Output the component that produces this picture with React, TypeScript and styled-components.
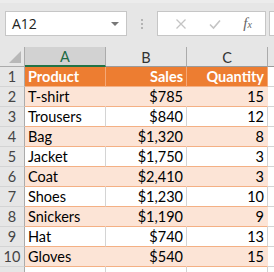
import { createGlobalStyle, styled } from 'styled-components';

const rows: [string, string, string][] = [
  ['T-shirt', '$785', '15'],
  ['Trousers', '$840', '12'],
  ['Bag', '$1,320', '8'],
  ['Jacket', '$1,750', '3'],
  ['Coat', '$2,410', '3'],
  ['Shoes', '$1,230', '10'],
  ['Snickers', '$1,190', '9'],
  ['Hat', '$740', '13'],
  ['Gloves', '$540', '15'],
];

export default function App() {
  return (
    <>
      <GlobalStyle />
      <Page>
        <TopStrip />
        <Toolbar>
          <NameBox>
            <span>A12</span>
            <Caret />
          </NameBox>
          <Grip>
            <i />
            <i />
            <i />
          </Grip>
          <FormulaBox>
            <ToolIcon viewBox="0 0 12 12">
              <path d="M1.5 1.5 L10.5 10.5 M10.5 1.5 L1.5 10.5" stroke="#c4c4c4" strokeWidth="1.3" fill="none" />
            </ToolIcon>
            <ToolIcon viewBox="0 0 12 12">
              <path d="M1 6.5 L4.5 10 L11 2.5" stroke="#c4c4c4" strokeWidth="1.6" fill="none" />
            </ToolIcon>
            <Fx>
              f<sub>x</sub>
            </Fx>
          </FormulaBox>
          <FormulaEdge />
        </Toolbar>

        <Sheet>
          <Corner>
            <CornerMark />
          </Corner>
          <ColHead $selected>A</ColHead>
          <ColHead>B</ColHead>
          <ColHead>C</ColHead>
          <ColHead $last />

          <RowHead>1</RowHead>
          <Cell $band="head">Product</Cell>
          <Cell $band="head" $right>Sales</Cell>
          <Cell $band="head" $right>Quantity</Cell>
          <Cell $band="plain" $edge />

          {rows.map((r, i) => {
            const band = i % 2 === 0 ? 'shade' : 'plain';
            return [
              <RowHead key={`h${i}`}>{i + 2}</RowHead>,
              <Cell key={`a${i}`} $band={band}>{r[0]}</Cell>,
              <Cell key={`b${i}`} $band={band} $right>{r[1]}</Cell>,
              <Cell key={`c${i}`} $band={band} $right>{r[2]}</Cell>,
              <Cell key={`d${i}`} $band="plain" $edge />,
            ];
          })}

          {/* row 11 is only a few pixels tall in the shot, its label is off screen */}
          <RowHead />
          <Cell $band="plain" />
          <Cell $band="plain" />
          <Cell $band="plain" />
          <Cell $band="plain" $edge />
        </Sheet>
      </Page>
    </>
  );
}

const GlobalStyle = createGlobalStyle`
  html, body {
    margin: 0;
    background: #e6e6e6;
    overflow: hidden;
  }
  body {
    font-family: Lato, "Open Sans", sans-serif;
  }
`;

const Page = styled.div`
  width: 274px;
  height: 272px;
  overflow: hidden;
  background: #e6e6e6;
`;

const TopStrip = styled.div`
  height: 3px;
  background: #ececec;
`;

const Toolbar = styled.div`
  display: flex;
  align-items: flex-start;
  height: 44px;
  padding: 8px 0 0 5px;
  box-sizing: border-box;
`;

const NameBox = styled.div`
  width: 122px;
  height: 25px;
  box-sizing: border-box;
  background: #fff;
  border: 1px solid #c6c6c6;
  display: flex;
  align-items: center;
  justify-content: space-between;
  padding: 0 7px 0 6px;
  font-family: "Open Sans", sans-serif;
  font-size: 14px;
  color: #222;
`;

const Caret = styled.span`
  width: 0;
  height: 0;
  border-left: 4px solid transparent;
  border-right: 4px solid transparent;
  border-top: 4px solid #777;
`;

const Grip = styled.div`
  width: 30px;
  height: 25px;
  display: flex;
  flex-direction: column;
  align-items: center;
  justify-content: center;
  gap: 2px;

  & > i {
    width: 2px;
    height: 2px;
    background: #b4b4b4;
  }
`;

const FormulaBox = styled.div`
  width: 109px;
  height: 25px;
  box-sizing: border-box;
  background: #fff;
  border: 1px solid #c6c6c6;
  display: flex;
  align-items: center;
  justify-content: space-around;
  padding: 0 2px 0 6px;
`;

const FormulaEdge = styled.div`
  margin-left: 3px;
  flex: 1;
  height: 25px;
  background: #fff;
  border: 1px solid #c6c6c6;
  border-right: none;
  box-sizing: border-box;
`;

const ToolIcon = styled.svg`
  width: 12px;
  height: 12px;
`;

const Fx = styled.span`
  font-family: "Liberation Serif", serif;
  font-style: italic;
  font-size: 15px;
  color: #666;
  line-height: 1;

  & > sub {
    font-size: 10px;
    vertical-align: 0;
  }
`;

const Sheet = styled.div`
  display: grid;
  grid-template-columns: 25px 81px 81px 81px 1fr;
  grid-auto-rows: 20px;
  font-size: 14.5px;
`;

const Corner = styled.div`
  position: relative;
  background: #e6e6e6;
  border-right: 1px solid #ababab;
  border-bottom: 1px solid #ababab;
`;

const CornerMark = styled.div`
  position: absolute;
  right: 3px;
  bottom: 3px;
  width: 0;
  height: 0;
  border-left: 12px solid transparent;
  border-bottom: 12px solid #b8b8b8;
`;

const ColHead = styled.div<{ $selected?: boolean; $last?: boolean }>`
  display: flex;
  align-items: center;
  justify-content: center;
  box-sizing: border-box;
  padding-top: 1px;
  background: ${(p) => (p.$selected ? '#d2d2d2' : '#e6e6e6')};
  color: ${(p) => (p.$selected ? '#1e6b45' : '#333')};
  border-right: ${(p) => (p.$last ? 'none' : '1px solid #ababab')};
  border-bottom: ${(p) => (p.$selected ? '2px solid #217346' : '1px solid #9b9b9b')};
`;

const RowHead = styled.div`
  display: flex;
  align-items: flex-end;
  justify-content: center;
  box-sizing: border-box;
  padding-bottom: 1px;
  background: #e6e6e6;
  color: #444;
  border-right: 1px solid #ababab;
  border-bottom: 1px solid #d4d4d4;
`;

const bands = {
  head: { bg: '#ed7d31', line: '#f4b084', col: '#f4a877', text: '#fff' },
  shade: { bg: '#fce4d6', line: '#f4b084', col: 'transparent', text: '#000' },
  plain: { bg: '#fff', line: '#f4b084', col: '#d4d4d4', text: '#000' },
};

const Cell = styled.div<{ $band: keyof typeof bands; $right?: boolean; $edge?: boolean }>`
  display: flex;
  align-items: flex-end;
  justify-content: ${(p) => (p.$right ? 'flex-end' : 'flex-start')};
  box-sizing: border-box;
  padding: 0 3px 1px 3px;
  white-space: nowrap;
  overflow: hidden;
  background: ${(p) => bands[p.$band].bg};
  color: ${(p) => bands[p.$band].text};
  font-weight: ${(p) => (p.$band === 'head' ? 700 : 400)};
  border-right: 1px solid ${(p) => (p.$edge ? 'transparent' : bands[p.$band].col)};
  border-bottom: 1px solid ${(p) => (p.$edge ? '#d4d4d4' : bands[p.$band].line)};
`;
